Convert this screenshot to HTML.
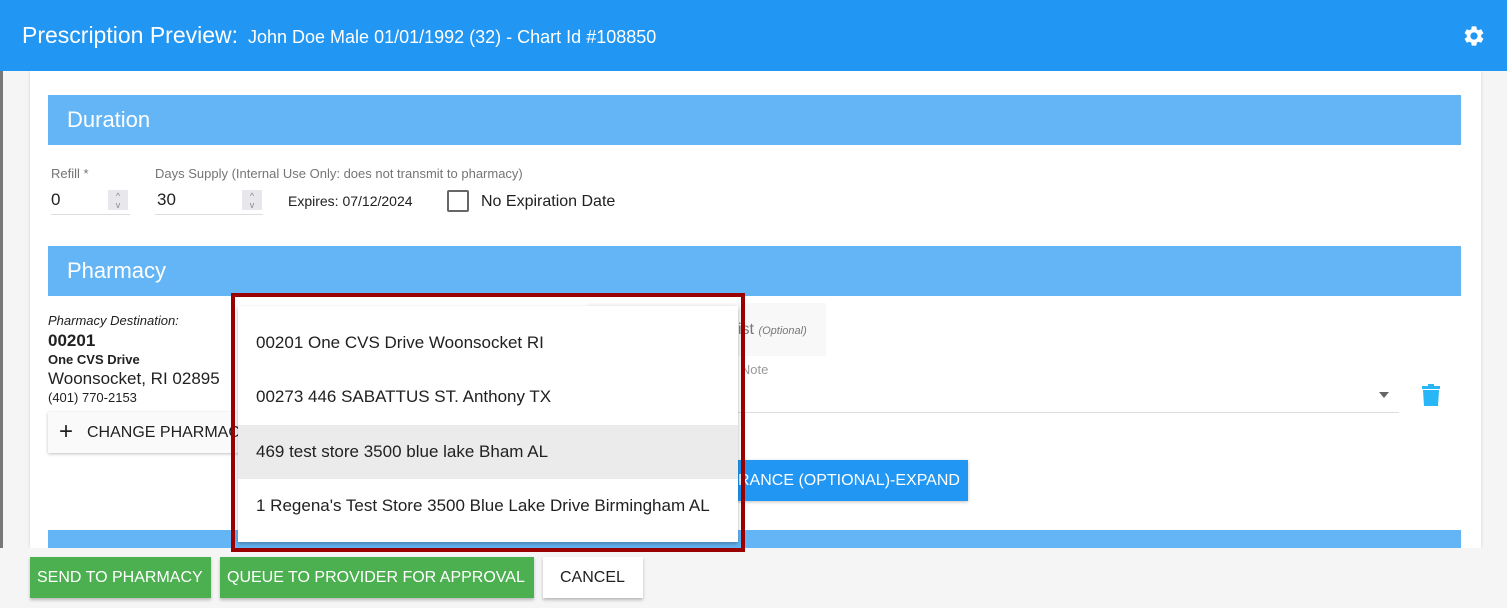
<!DOCTYPE html>
<html><head><style>
*{box-sizing:border-box;margin:0;padding:0}
body{width:1507px;height:608px;overflow:hidden;background:#f5f5f5;font-family:"Liberation Sans",sans-serif;position:relative;color:#212121}
.a{position:absolute;white-space:nowrap}
.hdr{left:0;top:0;width:1507px;height:71px;background:#2196f3;color:#fff}
.bar{background:#64b5f6;color:#fff;font-size:22px;left:48px;width:1413px;height:50px;padding:12px 0 0 19px}
.lbl{font-size:13px;color:#757575}
.btn{height:41px;font-size:16px;color:#fff;background:#4caf50;padding:12px 7px 0;box-shadow:0 2px 3px rgba(0,0,0,.25)}
.item{left:238px;width:500px;height:54px;font-size:17px;padding:17px 0 0 18px}
</style></head><body>
<div class="a" style="left:0;top:71px;width:3px;height:537px;background:#777"></div>
<div class="a" style="left:30px;top:71px;width:1451px;height:477px;background:#fff;box-shadow:0 0 3px rgba(0,0,0,.15)"></div>
<div class="a hdr"><span class="a" style="left:22px;top:22px;font-size:23px">Prescription Preview:</span><span class="a" style="left:248px;top:27px;font-size:18px">John Doe Male 01/01/1992 (32) - Chart Id #108850</span>
<svg class="a" style="left:1462px;top:24px" width="24" height="24" viewBox="0 0 24 24"><path fill="#fff" d="M19.14 12.94c.04-.3.06-.61.06-.94s-.02-.64-.07-.94l2.03-1.58a.49.49 0 0 0 .12-.61l-1.92-3.32a.488.488 0 0 0-.59-.22l-2.39.96c-.5-.38-1.03-.7-1.62-.94l-.36-2.54a.484.484 0 0 0-.48-.41h-3.84c-.24 0-.43.17-.47.41l-.36 2.54c-.59.24-1.130.57-1.62.94l-2.39-.96c-.22-.08-.47 0-.59.22L2.740 8.87c-.12.21-.08.47.12.61l2.03 1.58c-.05.3-.9.63-.09.94s.2.64.07.94l-2.03 1.58a.49.49 0 0 0-.12.61l1.92 3.32c.12.22.37.29.59.22l2.39-.96c.5.38 1.03.7 1.62.94l.36 2.54c.05.24.24.41.48.41h3.84c.24 0 .44-.17.47-.41l.36-2.54c.59-.24 1.13-.56 1.62-.94l2.39.96c.22.08.47 0 .59-.22l1.92-3.32c.12-.22.07-.47-.12-.61l-2.010-1.58zM12 15.6c-1.98 0-3.6-1.62-3.6-3.6s1.62-3.6 3.6-3.6 3.6 1.62 3.6 3.6-1.62 3.6-3.6 3.6z"/></svg></div>
<div class="a bar" style="top:95px">Duration</div>
<div class="a lbl" style="left:51px;top:166px">Refill *</div>
<div class="a" style="left:51px;top:190px;font-size:17px">0</div>
<div class="a" style="left:108px;top:190px;width:20px;height:20px;background:#e8e8ec;color:#888;font-size:9px;text-align:center;line-height:9px;padding-top:2px">^<br>v</div>
<div class="a" style="left:51px;top:214px;width:79px;height:1px;background:#ddd"></div>
<div class="a lbl" style="left:155px;top:166px">Days Supply (Internal Use Only: does not transmit to pharmacy)</div>
<div class="a" style="left:157px;top:190px;font-size:17px">30</div>
<div class="a" style="left:242px;top:190px;width:20px;height:20px;background:#e8e8ec;color:#888;font-size:9px;text-align:center;line-height:9px;padding-top:2px">^<br>v</div>
<div class="a" style="left:155px;top:214px;width:108px;height:1px;background:#ddd"></div>
<div class="a" style="left:288px;top:193px;font-size:14px">Expires: 07/12/2024</div>
<div class="a" style="left:447px;top:190px;width:22px;height:22px;border:2px solid #666;border-radius:2px"></div>
<div class="a" style="left:481px;top:193px;font-size:16px">No Expiration Date</div>
<div class="a bar" style="top:246px">Pharmacy</div>
<div class="a" style="left:48px;top:313px;font-size:13px;font-style:italic">Pharmacy Destination:</div>
<div class="a" style="left:48px;top:331px;font-size:17px;font-weight:bold">00201</div>
<div class="a" style="left:48px;top:352px;font-size:13px;font-weight:bold">One CVS Drive</div>
<div class="a" style="left:48px;top:369px;font-size:17px">Woonsocket, RI 02895</div>
<div class="a" style="left:48px;top:390px;font-size:13px">(401) 770-2153</div>
<div class="a" style="left:48px;top:412px;width:200px;height:41px;background:#fafafa;box-shadow:0 1px 3px rgba(0,0,0,.25);font-size:16px;padding:12px 0 0 12px;overflow:hidden"><b style="font-size:24px;position:absolute;left:11px;top:6px;font-weight:normal">+</b><span style="margin-left:27px">CHANGE PHARMACY</span></div>
<div class="a" style="left:588px;top:303px;width:238px;height:53px;background:#f8f8f8;font-size:16px;color:#777;padding:18px 0 0 150px">ist <i style="font-size:11px">(Optional)</i></div>
<div class="a" style="left:730px;top:362px;font-size:13px;color:#999">d Note</div>
<div class="a" style="left:700px;top:412px;width:699px;height:1px;background:#ddd"></div>
<div class="a" style="left:1379px;top:392px;border-left:5px solid transparent;border-right:5px solid transparent;border-top:6px solid #666"></div>
<svg class="a" style="left:1422px;top:384px" width="18" height="22" viewBox="0 0 18 22"><path fill="#29b6f6" d="M6 0h6v2h6v3H0V2h6zM1 6h16l-1 16H2z"/></svg>
<div class="a" style="left:700px;top:460px;width:268px;height:41px;background:#2196f3;color:#fff;font-size:16px;padding:12px 0 0 38px;box-shadow:0 1px 3px rgba(0,0,0,.25)">RANCE (OPTIONAL)-EXPAND</div>
<div class="a bar" style="top:530px;height:18px"></div>
<div class="a" style="left:0;top:548px;width:1507px;height:60px;background:#f5f5f5"></div>
<div class="a btn" style="left:30px;top:557px;width:181px">SEND TO PHARMACY</div>
<div class="a btn" style="left:220px;top:557px;width:314px">QUEUE TO PROVIDER FOR APPROVAL</div>
<div class="a btn" style="left:543px;top:557px;background:#fff;color:#212121;padding-left:17px;width:100px">CANCEL</div>
<div class="a" style="left:231px;top:293px;width:514px;height:259px;border:4px solid #990000"></div>
<div class="a" style="left:238px;top:306px;width:500px;height:236px;background:#fff;box-shadow:0 2px 4px rgba(0,0,0,.3)"></div>
<div class="a item" style="top:316px">00201 One CVS Drive Woonsocket RI</div>
<div class="a item" style="top:370px">00273 446 SABATTUS ST. Anthony TX</div>
<div class="a item" style="top:425px;background:#ebebeb">469 test store 3500 blue lake Bham AL</div>
<div class="a item" style="top:479px">1 Regena's Test Store 3500 Blue Lake Drive Birmingham AL</div>
</body></html>
